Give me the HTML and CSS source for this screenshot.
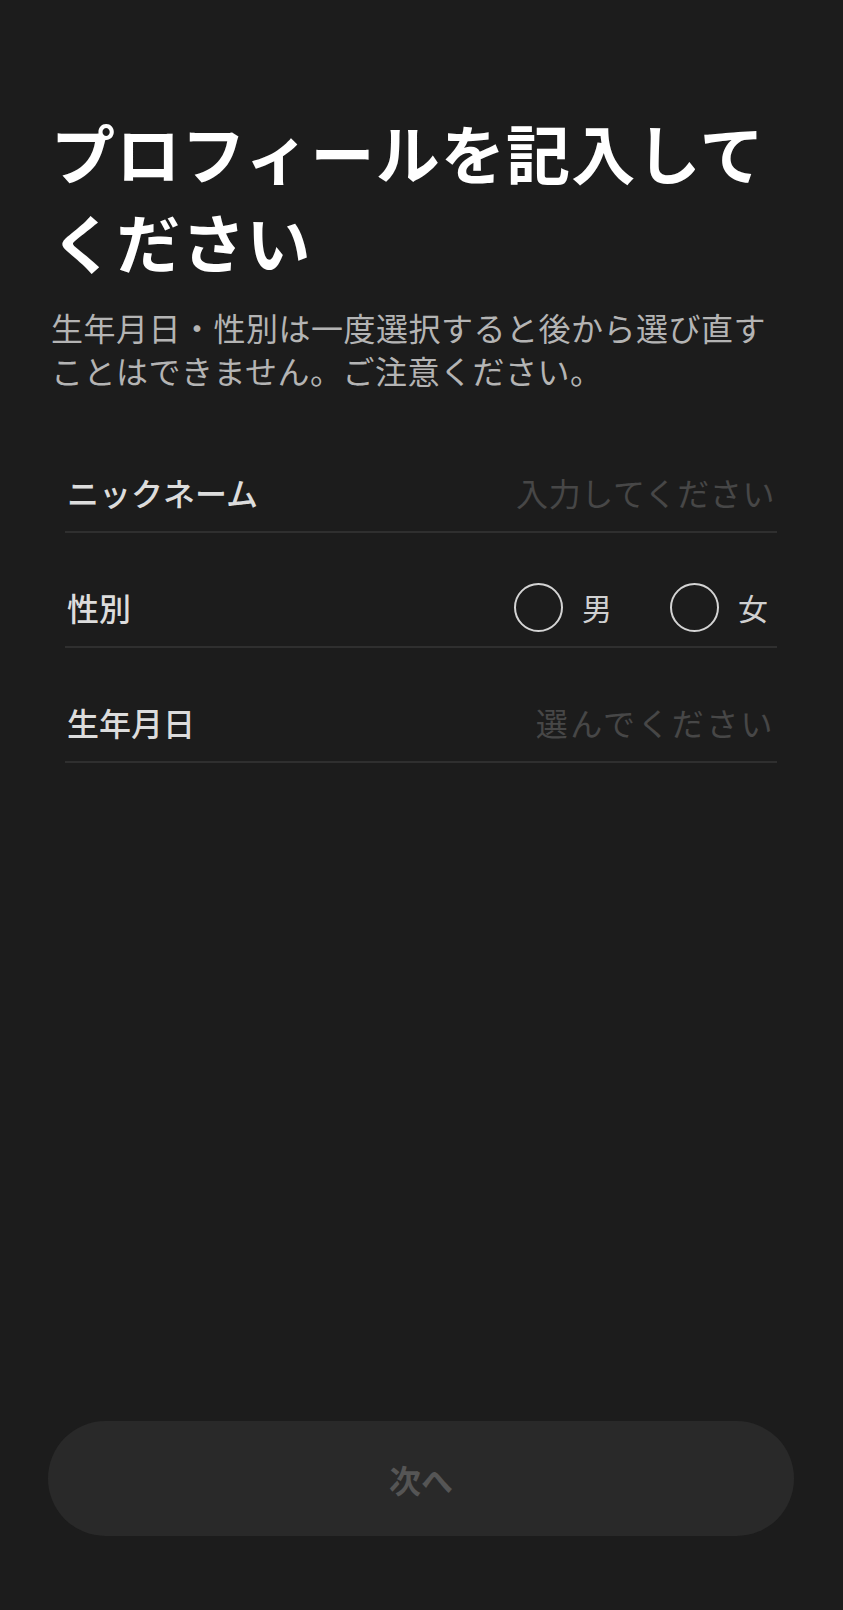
FILE: index.html
```html
<!doctype html>
<html lang="ja">

<head>
	<meta charset="utf-8">
	<link rel="stylesheet" href="styles.css">
	<title>プロフィール</title>
</head>

<body>
	<div class="page">
		<h1 class="title">プロフィールを記入してください</h1>
		<p class="note">生年月日・性別は一度選択すると後から選び直す<br>ことはできません。ご注意ください。</p>

		<div class="form">
			<div class="row">
				<span class="label">ニックネーム</span>
				<span class="placeholder">入力してください</span>
			</div>
			<div class="row">
				<span class="label">性別</span>
				<div class="radios">
					<span class="radio"><i class="circle"></i>男</span>
					<span class="radio"><i class="circle"></i>女</span>
				</div>
			</div>
			<div class="row">
				<span class="label">生年月日</span>
				<span class="placeholder wide">選んでください</span>
			</div>
		</div>

		<div class="btnNext">次へ</div>
	</div>
</body>

</html>
```

FILE: styles.css
```css
html,
body {
	margin: 0;
	padding: 0;
	background: #1c1c1c;
}

body {
	font-family: "Noto Sans CJK JP", "Noto Sans", sans-serif;
}

.page {
	display: flex;
	flex-direction: column;
	min-height: 1610px;
	box-sizing: border-box;
}

.title {
	margin: 107px 40px 0 51px;
	font-size: 64px;
	line-height: 89px;
	font-weight: 700;
	letter-spacing: 1.2px;
	color: #ffffff;
}

.note {
	margin: 21px 40px 0 51px;
	font-size: 32px;
	line-height: 43px;
	font-weight: 400;
	letter-spacing: 0.5px;
	color: #b4b4b4;
	white-space: nowrap;
}

.form {
	margin: 26px 66px 0 65px;
}

.row {
	display: flex;
	align-items: center;
	justify-content: space-between;
	height: 78px;
	padding-top: 35px;
	border-bottom: 2px solid #2f2f2f;
}

.label {
	padding-left: 2px;
	font-size: 32px;
	font-weight: 500;
	color: #dcdcdc;
}

.placeholder {
	padding-right: 2px;
	font-size: 32px;
	letter-spacing: 0.6px;
	color: #474747;
}

.placeholder.wide {
	letter-spacing: 2.4px;
}

.radios {
	display: flex;
	align-items: center;
	gap: 58px;
	padding-right: 9px;
}

.radio {
	display: flex;
	align-items: center;
	gap: 19px;
	font-size: 30px;
	color: #d0d0d0;
}

.circle {
	display: block;
	width: 45px;
	height: 45px;
	border: 2px solid #d4d4d4;
	border-radius: 50%;
}

.btnNext {
	margin: auto 49px 74px 48px;
	height: 115px;
	border-radius: 58px;
	background: #292929;
	color: #555555;
	font-size: 32px;
	font-weight: 700;
	display: flex;
	align-items: center;
	justify-content: center;
}
```
